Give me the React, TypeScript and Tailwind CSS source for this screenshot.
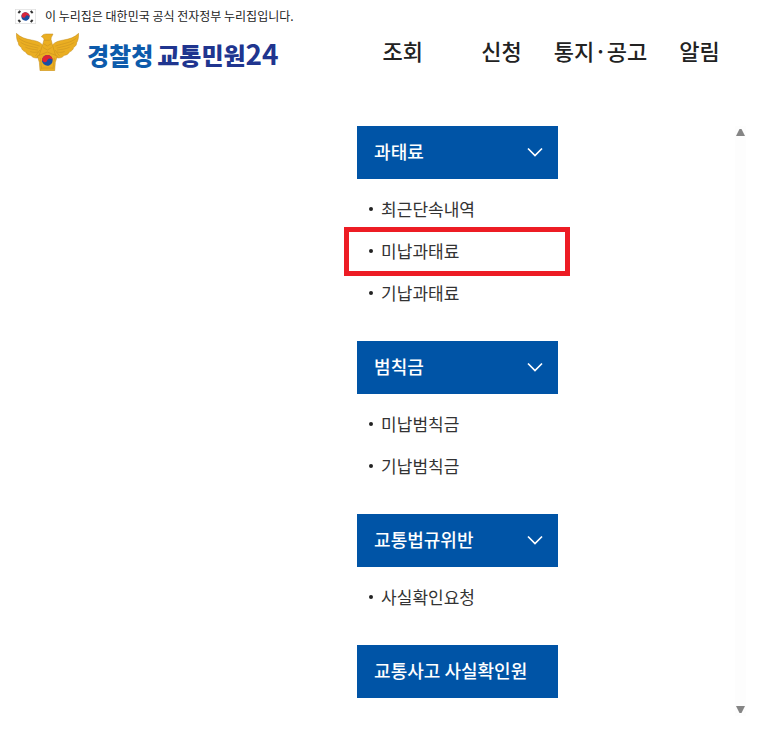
const NAV_ITEMS = ["조회", "신청", "통지·공고", "알림"];

interface MenuGroup {
  title: string;
  items: string[];
}

const MENU: MenuGroup[] = [
  { title: "과태료", items: ["최근단속내역", "미납과태료", "기납과태료"] },
  { title: "범칙금", items: ["미납범칙금", "기납범칙금"] },
  { title: "교통법규위반", items: ["사실확인요청"] },
  { title: "교통사고 사실확인원", items: [] },
];

const HIGHLIGHTED = "미납과태료";

function FlagIcon() {
  return (
    <svg viewBox="0 0 63 45" className="h-[15px] w-[21px] shrink-0" aria-hidden="true">
      <rect x="1" y="1" width="61" height="43" fill="#fff" stroke="#dcdcdc" strokeWidth="2" />
      <g transform="rotate(25 31.5 22.5)">
        <circle cx="31.5" cy="22.5" r="12.5" fill="#1c4fa0" />
        <path d="M19 22.5a12.5 12.5 0 0 1 25 0a6.25 6.25 0 0 0-12.5 0a6.25 6.25 0 0 1-12.5 0z" fill="#d8263c" />
      </g>
      <g stroke="#333" strokeWidth="6">
        <path d="M10 12l6-6M10 33l6 6M47 6l6 6M47 39l6-6" />
      </g>
    </svg>
  );
}

function PoliceEmblem() {
  return (
    <svg viewBox="0 0 189 114" className="h-[38px] w-[63px] shrink-0" aria-hidden="true">
      <g fill="#eaae22" stroke="#c08a1c" strokeWidth="1.5" strokeLinejoin="round">
        <path d="M1 1c12 12 27 17 45 20c14 2 26 6 33 14l4 10l-7 26l-14 4c-8 0-14-3-18-8c-8-1-13-5-15-10c-8-3-12-8-13-14c-6-3-9-8-9-14c-4-6-6-15-6-28z" />
        <path d="M188 1c-12 12-27 17-45 20c-14 2-26 6-33 14l-4 10l7 26l14 4c8 0 14-3 18-8c8-1 13-5 15-10c8-3 12-8 13-14c6-3 9-8 9-14c4-6 6-15 6-28z" />
        <path d="M76 11c4-6 9-8 15-8h20l-3 6c-2 3-3 6-3 10l5 19l9 30H69l10-30l5-18c0-4-3-7-8-9z" />
        <path d="M64 69l13-5l17-7l17 7l13 5l-6 19l-2 25H72l-2-25z" />
      </g>
      <g fill="none" stroke="#c58f20" strokeWidth="1.5" strokeLinecap="round">
        <path d="M9 16c16 14 37 15 61 23M15 29c15 10 32 11 51 16M29 43c12 6 24 6 36 8M44 56c8 3 15 2 22 1M59 68l12-16" />
        <path d="M180 16c-16 14-37 15-61 23M174 29c-15 10-32 11-51 16M160 43c-12 6-24 6-36 8M145 56c-8 3-15 2-22 1M130 68l-12-16" />
        <path d="M86 22h14M84 33l10 6l10-6M82 44l12 7l12-7M73 76l4 31M115 76l-4 31M80 105h28" />
      </g>
      <g transform="rotate(20 94 82)">
        <circle cx="94" cy="82" r="16" fill="#174fa4" />
        <path d="M78 82a16 16 0 0 1 32 0a8 8 0 0 0-16 0a8 8 0 0 1-16 0z" fill="#df2333" />
      </g>
    </svg>
  );
}

function Chevron() {
  return (
    <svg viewBox="0 0 16 10" className="h-[10px] w-[16px]" fill="none" stroke="#fff" strokeWidth="1.7" aria-hidden="true">
      <path d="M1 1.5l7 7l7-7" />
    </svg>
  );
}

function MenuSection({ title, items }: MenuGroup) {
  return (
    <section>
      <button
        type="button"
        className="flex h-[53px] w-full items-center justify-between bg-[#0054a6] pr-[15px] pb-[2px] pl-[17px] text-[18px] font-medium text-white"
      >
        <span>{title}</span>
        {items.length > 0 && <Chevron />}
      </button>
      {items.length > 0 && (
        <ul className="pt-[9px] pb-[27px]">
          {items.map((item) => (
            <li key={item} className="relative flex h-[42px] items-center pl-3">
              <span className="mr-2 size-1 rounded-full bg-[#222]" />
              <a href="#" className="text-[17px] text-[#333]">
                {item}
              </a>
              {item === HIGHLIGHTED && (
                <span className="pointer-events-none absolute -top-[3px] -right-3 -bottom-1 -left-[13px] border-[5px] border-[#ed1c24]" />
              )}
            </li>
          ))}
        </ul>
      )}
    </section>
  );
}

export default function App() {
  return (
    <div className="bg-white font-['Noto_Sans_CJK_KR',sans-serif] text-[#222]">
      <header>
        <div className="flex h-8 items-center gap-[9px] pl-[15px] text-[12px]">
          <FlagIcon />
          <p>이 누리집은 대한민국 공식 전자정부 누리집입니다.</p>
        </div>
        <div className="flex h-10 items-center pr-[19px] pl-4">
          <a href="#" className="flex w-[46%] shrink-0 items-center gap-2">
            <PoliceEmblem />
            <span className="flex items-baseline gap-1 pt-1 text-[24px] leading-8 font-black whitespace-nowrap">
              <span className="text-[#0d5bab]">경찰청</span>
              <span className="text-[#20358f]">
                교통민원<span className="text-[28px] font-bold">24</span>
              </span>
            </span>
          </a>
          <nav className="grid flex-1 grid-cols-4 pb-1 text-center text-[22px] font-medium whitespace-nowrap">
            {NAV_ITEMS.map((item) => (
              <a key={item} href="#">
                {item}
              </a>
            ))}
          </nav>
        </div>
      </header>

      <main className="mt-[54px] flex justify-between pr-[22px] pl-[46.5%]">
        <div className="w-[201px] pb-[18px]">
          {MENU.map((group) => (
            <MenuSection key={group.title} {...group} />
          ))}
        </div>
        <div className="flex w-[11px] flex-col items-center justify-between bg-[#fdfdfd] py-[3px]">
          <button type="button" aria-label="위로" className="h-[7px]">
            <svg viewBox="0 0 9 7" className="h-[7px] w-[9px]" fill="#858585">
              <path d="M3.5 0h2L9 7H0z" />
            </svg>
          </button>
          <button type="button" aria-label="아래로" className="h-[7px]">
            <svg viewBox="0 0 9 7" className="h-[7px] w-[9px]" fill="#858585">
              <path d="M0 0h9L5.5 7h-2z" />
            </svg>
          </button>
        </div>
      </main>
    </div>
  );
}
